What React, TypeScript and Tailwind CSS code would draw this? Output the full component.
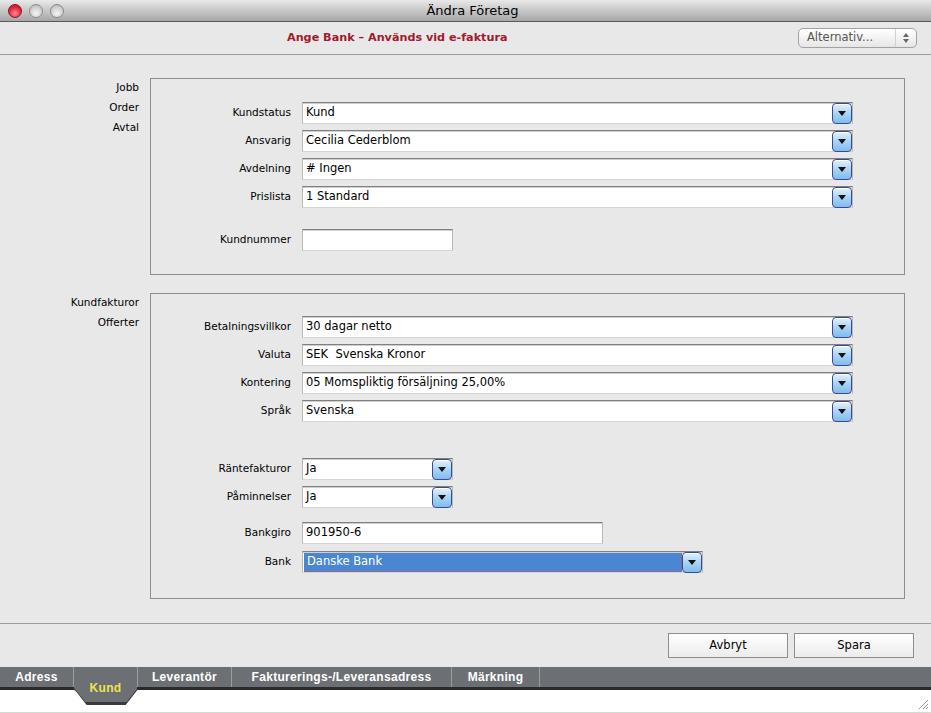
import React from "react";

const font = { fontFamily: '"DejaVu Sans", "Liberation Sans", sans-serif' };
const tabFont = { fontFamily: '"Liberation Sans", Arial, sans-serif' };

function Arrow() {
  return (
    <div className="w-[20px] h-[21px] shrink-0 rounded-[4px] border border-[#3b4a8f] bg-gradient-to-b from-[#e4f1fc] via-[#a9d3f5] to-[#7fbcee] flex items-center justify-center shadow-[inset_0_1px_0_#ffffff]">
      <svg width="8" height="5" viewBox="0 0 8 5">
        <path d="M0 0 L8 0 L4 5 Z" fill="#111" />
      </svg>
    </div>
  );
}

function Field({
  value,
  width,
  select = true,
  selected = false,
}: {
  value: string;
  width: string;
  select?: boolean;
  selected?: boolean;
}) {
  return (
    <div className={`${width} h-[22px] flex items-center bg-white border border-[#b8b8b8] border-t-[#808080] shadow-[inset_0_1px_0_#cfcfcf] border-b-[#d6d6d6]`}>
      <div
        className={
          selected
            ? "flex-1 h-[19px] ml-[1px] mt-[1px] flex items-center pl-[3px] bg-[#4a87d2] text-white border-b border-r border-dotted border-[#e0463c]"
            : "flex-1 flex items-center pl-[3px] text-black"
        }
      >
        <span className="text-[11.5px] leading-none whitespace-pre">{value}</span>
      </div>
      {select && <Arrow />}
    </div>
  );
}

function Row({
  label,
  children,
}: {
  label: string;
  children: React.ReactNode;
}) {
  return (
    <div className="flex items-center h-[22px]">
      <div className="w-[140px] text-right text-[10.5px] text-black">{label}</div>
      <div className="ml-[11px]">{children}</div>
    </div>
  );
}

function SideLinks({ items }: { items: string[] }) {
  return (
    <div className="w-[139px] -mt-[1px] text-right text-[10.5px] leading-[20px] text-black">
      {items.map((i) => (
        <div key={i}>{i}</div>
      ))}
    </div>
  );
}

const tabs = [
  { name: "Adress", w: "w-[74px]" },
  { name: "Kund", w: "w-[63px]", active: true },
  { name: "Leverantör", w: "w-[95px] border-l" },
  { name: "Fakturerings-/Leveransadress", w: "w-[220px]" },
  { name: "Märkning", w: "w-[88px]" },
];

export default function App() {
  return (
    <div className="w-[931px] h-[713px] bg-[#e8e8e9] flex flex-col overflow-hidden" style={font}>
      {/* Title bar */}
      <div className="h-[22px] shrink-0 bg-gradient-to-b from-[#e9e9e9] to-[#a7a7a7] border-b border-[#5a5a5a] flex items-center">
        <div className="flex items-center gap-[7px] pl-[8px]">
          <div className="w-[14px] h-[14px] rounded-full border border-[#8a1420] bg-[radial-gradient(circle_at_50%_70%,#ff8a8e,#e0243a_60%,#a81024)]" />
          <div className="w-[14px] h-[14px] rounded-full border border-[#8b8b8b] bg-[radial-gradient(circle_at_50%_70%,#f4f4f4,#cfcfcf_60%,#a8a8a8)]" />
          <div className="w-[14px] h-[14px] rounded-full border border-[#8b8b8b] bg-[radial-gradient(circle_at_50%_70%,#f4f4f4,#cfcfcf_60%,#a8a8a8)]" />
        </div>
        <div className="flex-1 text-center text-[13px] text-black pr-[50px]">Ändra Företag</div>
      </div>

      {/* Header */}
      <div className="h-[33px] shrink-0 flex items-center border-b border-[#9c9c9c]">
        <div className="pl-[287px] flex-1 text-[11.2px] font-bold text-[#a3192c]">Ange Bank – Används vid e-faktura</div>
        <div className="mr-[14px] w-[119px] h-[20px] rounded-[5px] border border-[#a2a2a2] bg-gradient-to-b from-[#ffffff] to-[#e6e6e6] flex items-center">
          <span className="flex-1 pl-[8px] text-[11.5px] text-[#555]">Alternativ...</span>
          <div className="w-[21px] h-full border-l border-[#d0d0d0] flex flex-col items-center justify-center gap-[2px]">
            <svg width="6" height="4" viewBox="0 0 6 4"><path d="M0 4 L6 4 L3 0 Z" fill="#666" /></svg>
            <svg width="6" height="4" viewBox="0 0 6 4"><path d="M0 0 L6 0 L3 4 Z" fill="#666" /></svg>
          </div>
        </div>
      </div>

      {/* Content */}
      <div className="h-[568px] shrink-0 flex flex-col pt-[23px]">
        <div className="flex gap-[11px]">
          <SideLinks items={["Jobb", "Order", "Avtal"]} />
          <div className="w-[755px] h-[197px] border border-[#8e8e8e] pt-[23px] flex flex-col gap-[6px]">
            <Row label="Kundstatus"><Field value="Kund" width="w-[551px]" /></Row>
            <Row label="Ansvarig"><Field value="Cecilia Cederblom" width="w-[551px]" /></Row>
            <Row label="Avdelning"><Field value="# Ingen" width="w-[551px]" /></Row>
            <Row label="Prislista"><Field value="1 Standard" width="w-[551px]" /></Row>
            <div className="mt-[15px]">
              <Row label="Kundnummer"><Field value="" width="w-[151px]" select={false} /></Row>
            </div>
          </div>
        </div>

        <div className="flex gap-[11px] mt-[18px]">
          <SideLinks items={["Kundfakturor", "Offerter"]} />
          <div className="w-[755px] h-[306px] border border-[#8e8e8e] pt-[22px] flex flex-col gap-[6px]">
            <Row label="Betalningsvillkor"><Field value="30 dagar netto" width="w-[551px]" /></Row>
            <Row label="Valuta"><Field value="SEK  Svenska Kronor" width="w-[551px]" /></Row>
            <Row label="Kontering"><Field value="05 Momspliktig försäljning 25,00%" width="w-[551px]" /></Row>
            <Row label="Språk"><Field value="Svenska" width="w-[551px]" /></Row>
            <div className="mt-[30px] flex flex-col gap-[6px]">
              <Row label="Räntefakturor"><Field value="Ja" width="w-[151px]" /></Row>
              <Row label="Påminnelser"><Field value="Ja" width="w-[151px]" /></Row>
            </div>
            <div className="mt-[8px] flex flex-col gap-[7px]">
              <Row label="Bankgiro"><Field value="901950-6" width="w-[301px]" select={false} /></Row>
              <Row label="Bank"><Field value="Danske Bank" width="w-[401px]" selected /></Row>
            </div>
          </div>
        </div>
      </div>

      {/* Buttons */}
      <div className="h-[44px] shrink-0 border-t border-[#9c9c9c] flex items-start justify-end gap-[6px] pt-[9px] pr-[17px]">
        <button className="w-[120px] h-[25px] border border-[#8e8e8e] bg-gradient-to-b from-[#ffffff] to-[#ececec] text-[11.5px] text-black">Avbryt</button>
        <button className="w-[120px] h-[25px] border border-[#8e8e8e] bg-gradient-to-b from-[#ffffff] to-[#ececec] text-[11.5px] text-black">Spara</button>
      </div>

      {/* Tab bar */}
      <div className="h-[23px] shrink-0 bg-[#6c6f74] border-b-[3px] border-[#2a2a2a] flex items-stretch" style={tabFont}>
        {tabs.map((t) =>
          t.active ? (
            <div key={t.name} className={`${t.w} relative z-10 h-[38px] -mb-[18px]`}>
              <div className="h-[38px] bg-[#3a3a3a] [clip-path:polygon(0_0,100%_0,100%_62%,82%_100%,20%_100%,4%_66%,0_60%)]">
                <div className="h-[35px] bg-[#6c6f74] [clip-path:polygon(0_0,100%_0,100%_62%,84%_100%,18%_100%,0_60%)] flex items-end justify-center pb-[5px] text-[12px] font-bold tracking-[0.3px] text-[#ece44e]">
                  {t.name}
                </div>
              </div>
            </div>
          ) : (
            <div key={t.name} className={`${t.w} border-r border-[#9a9ca0] flex items-center justify-center text-[12px] font-bold tracking-[0.3px] text-white`}>
              {t.name}
            </div>
          )
        )}
        <div className="flex-1" />
      </div>

      {/* Bottom strip */}
      <div className="flex-1 bg-white border-b border-[#d8d8d8] flex items-end justify-end pr-[2px] pb-[2px]">
        <svg width="12" height="12" viewBox="0 0 12 12">
          <path d="M11 2 L2 11 M11 6 L6 11 M11 9 L9 11" stroke="#9a9a9a" strokeWidth="1" />
        </svg>
      </div>
    </div>
  );
}
